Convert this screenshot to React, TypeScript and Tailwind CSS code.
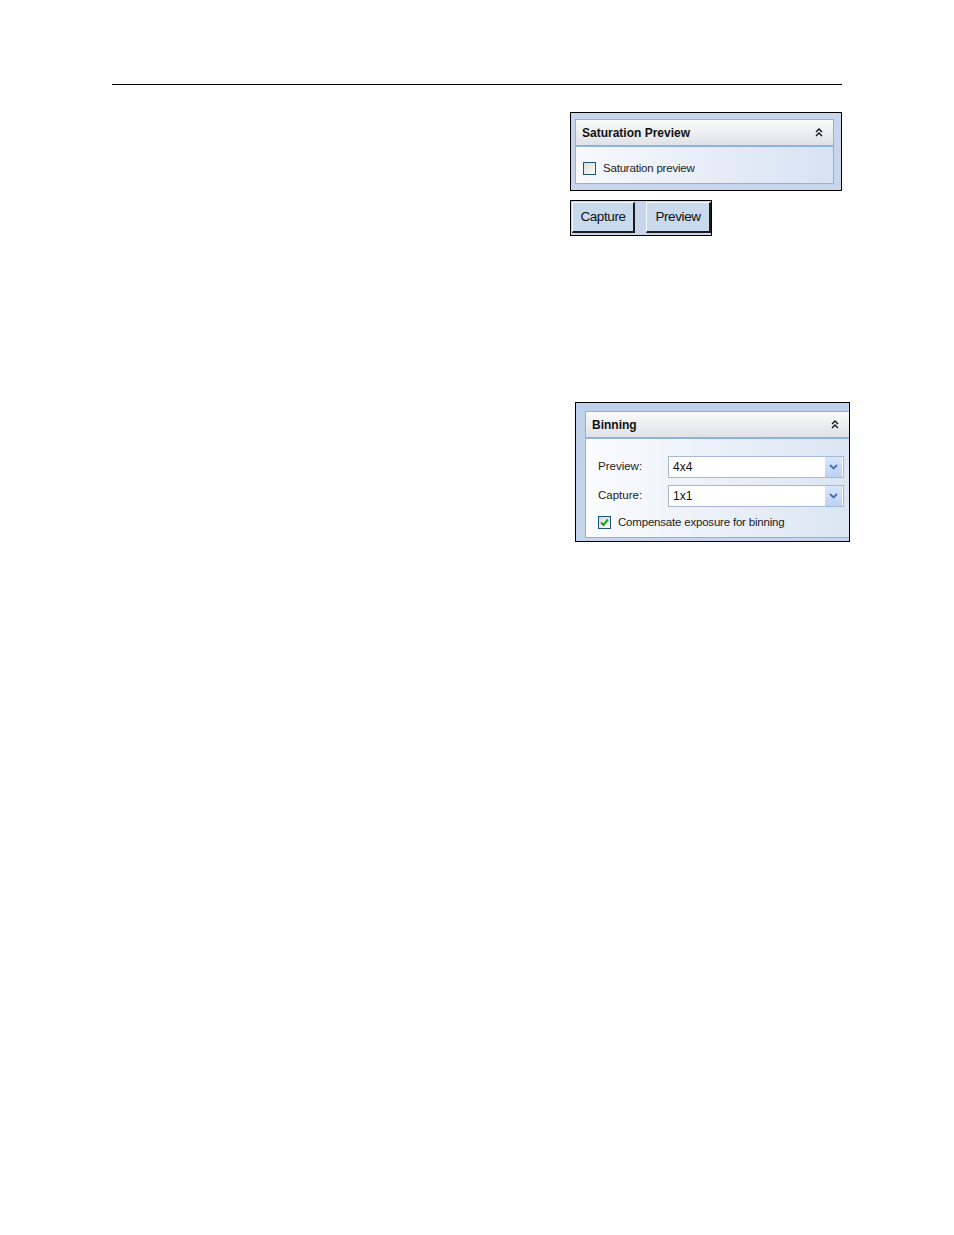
import React from 'react';

const font = { fontFamily: '"Liberation Sans", Arial, sans-serif' };

function Chevrons(): JSX.Element {
  return (
    <svg width="8" height="9" viewBox="0 0 8 9" className="shrink-0">
      <path d="M1 4 L4 1 L7 4 M1 8 L4 5 L7 8" fill="none" stroke="#111" strokeWidth="1.4" />
    </svg>
  );
}

function Checkbox({ checked }: { checked?: boolean }): JSX.Element {
  return (
    <span className="w-[13px] h-[13px] border border-[#1c5180] bg-gradient-to-br from-[#dcdcd6] to-[#fbfbf9] flex items-center justify-center shrink-0">
      {checked && (
        <svg width="9" height="9" viewBox="0 0 9 9">
          <path d="M1 4.5 L3.5 7 L8 1.5" fill="none" stroke="#21a121" strokeWidth="2" />
        </svg>
      )}
    </span>
  );
}

function GroupHeader({ title }: { title: string }): JSX.Element {
  return (
    <div className="h-[27px] flex items-center justify-between pl-[6px] pr-[10px] bg-gradient-to-b from-[#fbfbfb] to-[#dfe2e7] border-b-2 border-[#8eb0e2]">
      <span className="text-[12px] font-bold text-[#111]">{title}</span>
      <Chevrons />
    </div>
  );
}

function Select({ value }: { value: string }): JSX.Element {
  return (
    <div className="w-[176px] h-[22px] border border-[#a5b8d6] bg-white flex items-center justify-between">
      <span className="pl-[4px] text-[12px] text-[#111]">{value}</span>
      <span className="w-[17px] h-[20px] mr-px bg-gradient-to-b from-[#d9e6fb] to-[#bcd1f6] flex items-center justify-center">
        <svg width="9" height="6" viewBox="0 0 9 6">
          <path d="M1 1 L4.5 4.5 L8 1" fill="none" stroke="#4d6fa8" strokeWidth="1.8" />
        </svg>
      </span>
    </div>
  );
}

function CaptureButton({ label, w }: { label: string; w: string }): JSX.Element {
  return (
    <button
      className={`${w} h-[31px] bg-[#c9d9ee] border-t border-l border-t-[#f4f8fd] border-l-[#f4f8fd] border-b-2 border-r-2 border-b-[#1b1b1b] border-r-[#1b1b1b] text-[13.5px] tracking-[-0.4px] text-[#111] flex items-center justify-center`}
    >
      {label}
    </button>
  );
}

export default function App(): JSX.Element {
  return (
    <div className="w-[954px] h-[1235px] bg-white relative" style={font}>
      <div className="pt-[84px] pl-[112px]">
        <div className="w-[730px] h-px bg-black" />
      </div>

      {/* Saturation Preview */}
      <div className="ml-[570px] mt-[27px] w-[272px] h-[79px] border border-black bg-[#c7d6ec] pt-[6px] pl-[4px]">
        <div className="w-[259px] h-[65px] border border-[#8eb0e2] flex flex-col">
          <GroupHeader title="Saturation Preview" />
          <div className="flex-1 bg-gradient-to-r from-[#f7f9fc] to-[#d7e2f2] flex items-center pl-[7px] pt-[15px] gap-[7px] self-stretch content-start">
            <div className="flex items-center gap-[7px] h-[13px] self-start">
              <Checkbox />
              <span className="text-[11.5px] leading-[13px] text-[#222] tracking-[-0.2px]">Saturation preview</span>
            </div>
          </div>
        </div>
      </div>

      {/* Capture / Preview */}
      <div className="ml-[570px] mt-[9px] w-[142px] h-[36px] border border-black bg-[#c7d6ec] flex items-start gap-[11px] pt-[1px] pl-[1px]">
        <CaptureButton label="Capture" w="w-[63px]" />
        <CaptureButton label="Preview" w="w-[65px]" />
      </div>

      {/* Binning */}
      <div className="ml-[575px] mt-[166px] w-[275px] h-[140px] border border-black bg-gradient-to-b from-[#bfd0ea] to-[#c7d6ec] pt-[8px] pl-[9px] overflow-hidden">
        <div className="w-[264px] h-[127px] border border-r-0 border-[#8eb0e2] flex flex-col">
          <GroupHeader title="Binning" />
          <div className="flex-1 bg-gradient-to-r from-[#fbfcfe] to-[#dbe5f3] flex flex-col pl-[12px] pt-[17px]">
            <div className="flex items-center h-[22px]">
              <span className="w-[70px] text-[11.5px] text-[#222]">Preview:</span>
              <Select value="4x4" />
            </div>
            <div className="flex items-center h-[22px] mt-[7px]">
              <span className="w-[70px] text-[11.5px] text-[#222]">Capture:</span>
              <Select value="1x1" />
            </div>
            <div className="flex items-center gap-[7px] mt-[7px]">
              <Checkbox checked />
              <span className="text-[11.5px] text-[#222] tracking-[-0.2px]">Compensate exposure for binning</span>
            </div>
          </div>
        </div>
      </div>
    </div>
  );
}
